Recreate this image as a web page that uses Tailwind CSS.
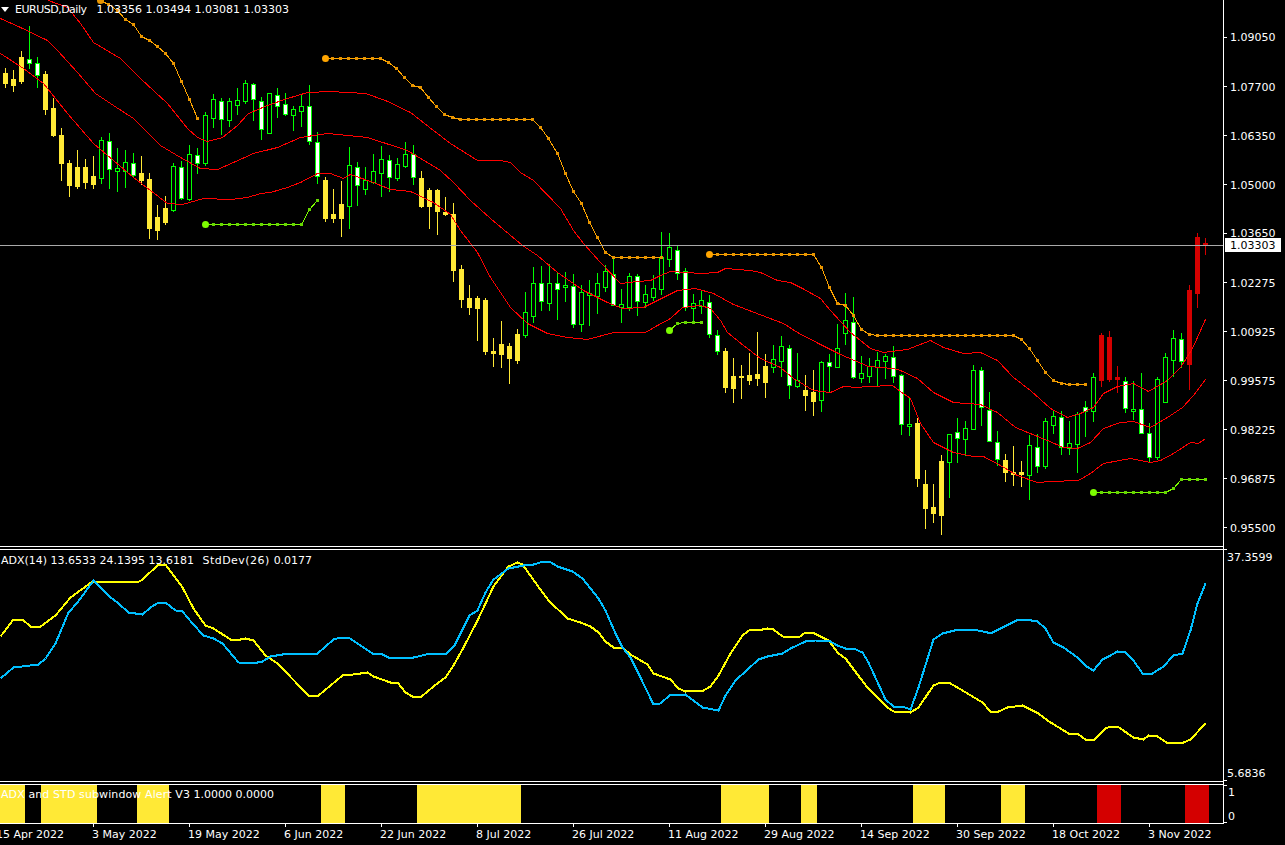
<!DOCTYPE html>
<html lang="en">
<head>
    <meta charset="UTF-8">
    <meta name="viewport" content="width=device-width, initial-scale=1.0">
    <title>EURUSD,Daily</title>
    <script src="https://cdn.jsdelivr.net/npm/@tailwindcss/browser@4"></script>
</head>
<body class="bg-black text-white overflow-hidden font-['DejaVu_Sans',sans-serif] text-[11px] leading-[14px]">
    <div class="flex w-[1285px] h-[845px] overflow-hidden">
        <!-- chart column -->
        <div class="w-[1223px] shrink-0 flex flex-col">
            <!-- main window -->
            <div class="relative h-[547px] border-b border-white">
                <svg id="mainChart" class="block" width="1223" height="546" viewBox="0 0 1223 546"></svg>
                <div class="absolute left-[1px] top-[7px] w-0 h-0 border-l-[4px] border-r-[4px] border-t-[5px] border-l-transparent border-r-transparent border-t-white"></div>
                <div class="absolute left-[15px] top-[3px] whitespace-pre"><span class="tracking-[-0.5px] mr-[3px]">EURUSD,Daily</span>  1.03356 1.03494 1.03081 1.03303</div>
            </div>
            <!-- ADX window -->
            <div class="relative mt-[2px] h-[233px] border-y border-white">
                <svg id="adxChart" class="block" width="1223" height="231" viewBox="0 550 1223 231"></svg>
                <div class="absolute left-[1px] top-[4px] whitespace-pre">ADX(14) 13.6533 24.1395 13.6181 <span class="ml-[5px] tracking-[0.45px]">StdDev(26) </span>0.0177</div>
            </div>
            <!-- alert window -->
            <div class="relative mt-[2px] h-[40px] border-y border-white">
                <svg class="block" width="1223" height="38" viewBox="0 784 1223 38" shape-rendering="crispEdges">
                    <g fill="#ffe936">
                        <rect x="0" y="784" width="25" height="38"/>
                        <rect x="41" y="784" width="56" height="38"/>
                        <rect x="137" y="784" width="32" height="38"/>
                        <rect x="321" y="784" width="24" height="38"/>
                        <rect x="417" y="784" width="104" height="38"/>
                        <rect x="721" y="784" width="48" height="38"/>
                        <rect x="801" y="784" width="16" height="38"/>
                        <rect x="913" y="784" width="32" height="38"/>
                        <rect x="1001" y="784" width="24" height="38"/>
                    </g>
                    <g fill="#d40000">
                        <rect x="1097" y="784" width="24" height="38"/>
                        <rect x="1185" y="784" width="24" height="38"/>
                    </g>
                </svg>
                <div class="absolute left-[1px] top-[3px] whitespace-pre"><span class="tracking-[0.1px]">ADX and STD subwindow Alert V3 </span>1.0000 0.0000</div>
            </div>
            <!-- time scale -->
            <div class="relative flex-1 overflow-hidden">
                <span class="absolute left-[-4px] top-[4px] whitespace-nowrap">15 Apr 2022</span>
                <span class="absolute left-[92px] top-[4px] whitespace-nowrap">3 May 2022</span>
                <span class="absolute left-[188px] top-[4px] whitespace-nowrap">19 May 2022</span>
                <span class="absolute left-[284px] top-[4px] whitespace-nowrap">6 Jun 2022</span>
                <span class="absolute left-[380px] top-[4px] whitespace-nowrap">22 Jun 2022</span>
                <span class="absolute left-[476px] top-[4px] whitespace-nowrap">8 Jul 2022</span>
                <span class="absolute left-[572px] top-[4px] whitespace-nowrap">26 Jul 2022</span>
                <span class="absolute left-[668px] top-[4px] whitespace-nowrap">11 Aug 2022</span>
                <span class="absolute left-[764px] top-[4px] whitespace-nowrap">29 Aug 2022</span>
                <span class="absolute left-[860px] top-[4px] whitespace-nowrap">14 Sep 2022</span>
                <span class="absolute left-[956px] top-[4px] whitespace-nowrap">30 Sep 2022</span>
                <span class="absolute left-[1052px] top-[4px] whitespace-nowrap">18 Oct 2022</span>
                <span class="absolute left-[1148px] top-[4px] whitespace-nowrap">3 Nov 2022</span>
                <i class="absolute left-[93px] top-0 w-px h-[3px] bg-white"></i>
                <i class="absolute left-[189px] top-0 w-px h-[3px] bg-white"></i>
                <i class="absolute left-[285px] top-0 w-px h-[3px] bg-white"></i>
                <i class="absolute left-[381px] top-0 w-px h-[3px] bg-white"></i>
                <i class="absolute left-[477px] top-0 w-px h-[3px] bg-white"></i>
                <i class="absolute left-[573px] top-0 w-px h-[3px] bg-white"></i>
                <i class="absolute left-[669px] top-0 w-px h-[3px] bg-white"></i>
                <i class="absolute left-[765px] top-0 w-px h-[3px] bg-white"></i>
                <i class="absolute left-[861px] top-0 w-px h-[3px] bg-white"></i>
                <i class="absolute left-[957px] top-0 w-px h-[3px] bg-white"></i>
                <i class="absolute left-[1053px] top-0 w-px h-[3px] bg-white"></i>
                <i class="absolute left-[1149px] top-0 w-px h-[3px] bg-white"></i>
            </div>
        </div>
        <!-- price scale -->
        <div class="relative flex-1 h-[824px] border-l border-white">
            <span class="absolute left-[6px] top-[31px]">1.09050</span>
            <span class="absolute left-[6px] top-[81px]">1.07700</span>
            <span class="absolute left-[6px] top-[130px]">1.06350</span>
            <span class="absolute left-[6px] top-[179px]">1.05000</span>
            <span class="absolute left-[6px] top-[227px]">1.03650</span>
            <span class="absolute left-[6px] top-[277px]">1.02275</span>
            <span class="absolute left-[6px] top-[326px]">1.00925</span>
            <span class="absolute left-[6px] top-[375px]">0.99575</span>
            <span class="absolute left-[6px] top-[424px]">0.98225</span>
            <span class="absolute left-[6px] top-[473px]">0.96875</span>
            <span class="absolute left-[6px] top-[522px]">0.95500</span>
            <span class="absolute left-[1px] top-[238px] w-[56px] h-[14px] pl-[5px] pt-px bg-white text-black">1.03303</span>
            <span class="absolute left-[3px] top-[551px]">37.3599</span>
            <span class="absolute left-[3px] top-[767px]">5.6836</span>
            <span class="absolute left-[4px] top-[786px]">1</span>
            <span class="absolute left-[4px] top-[810px]">0</span>
            <i class="absolute left-0 top-[37px] w-[3px] h-px bg-white"></i>
            <i class="absolute left-0 top-[86px] w-[3px] h-px bg-white"></i>
            <i class="absolute left-0 top-[135px] w-[3px] h-px bg-white"></i>
            <i class="absolute left-0 top-[184px] w-[3px] h-px bg-white"></i>
            <i class="absolute left-0 top-[233px] w-[3px] h-px bg-white"></i>
            <i class="absolute left-0 top-[282px] w-[3px] h-px bg-white"></i>
            <i class="absolute left-0 top-[331px] w-[3px] h-px bg-white"></i>
            <i class="absolute left-0 top-[380px] w-[3px] h-px bg-white"></i>
            <i class="absolute left-0 top-[429px] w-[3px] h-px bg-white"></i>
            <i class="absolute left-0 top-[478px] w-[3px] h-px bg-white"></i>
            <i class="absolute left-0 top-[527px] w-[3px] h-px bg-white"></i>
            <i class="absolute left-0 top-[549px] w-[3px] h-px bg-white"></i>
            <i class="absolute left-0 top-[780px] w-[3px] h-px bg-white"></i>
            <i class="absolute left-0 top-[785px] w-[3px] h-px bg-white"></i>
            <i class="absolute left-0 top-[822px] w-[3px] h-px bg-white"></i>
        </div>
    </div>

    <script>
        // y=yellow bear, w=white filled, k=hollow, r=red: [type, high, top, bottom, low]
        const candles = [
            ['y',68,73,83,87],['y',70,79,85,91],['y',51,57,81,83],['w',26,59,63,68],['w',57,63,75,87],
            ['y',71,74,109,114],['y',98,108,135,136],['y',128,135,163,180],['y',160,163,185,196],['y',150,167,186,188],
            ['y',159,167,182,188],['y',156,176,184,188],['k',137,140,178,183],['w',133,141,169,188],['k',148,168,171,191],
            ['k',150,162,171,187],['w',153,163,175,176],['y',156,173,180,184],['y',173,179,228,238],['y',205,217,230,239],
            ['y',196,208,222,224],['k',163,166,210,211],['w',161,167,198,199],['k',145,154,199,200],['w',148,155,163,173],
            ['k',112,115,163,165],['k',94,99,118,127],['w',98,101,119,134],['k',98,101,120,126],['k',88,100,105,114],
            ['k',80,83,101,103],['w',83,84,99,120],['w',97,101,129,139],['k',93,93,133,133],['w',88,95,106,117],
            ['w',93,104,114,115],['k',106,109,115,130],['k',94,106,111,126],['w',85,106,141,144],['w',132,142,176,183],
            ['y',177,180,218,221],['y',189,214,218,222],['y',181,204,218,236],['k',147,165,206,228],['w',162,167,185,205],
            ['k',167,180,189,194],['k',154,171,182,183],['k',146,159,173,196],['w',155,160,177,191],['k',158,164,178,180],
            ['k',142,154,166,167],['w',145,154,177,184],['y',171,178,206,207],['y',188,190,206,228],['y',189,190,211,234],
            ['y',197,212,214,215],['y',203,214,270,281],['y',265,269,299,307],['y',285,298,307,314],['y',296,298,308,340],
            ['y',298,300,351,354],['y',338,351,353,366],['y',321,344,354,367],['y',343,346,358,383],['y',329,334,360,363],
            ['k',292,312,335,337],['k',267,283,316,322],['w',266,283,301,310],['k',264,283,303,310],['w',272,283,289,319],
            ['k',272,285,287,301],['w',274,286,324,327],['k',285,292,324,331],['k',280,293,295,325],['k',273,283,296,313],
            ['k',265,271,287,291],['w',258,274,305,305],['k',289,304,307,322],['k',273,276,307,310],['w',274,276,301,315],
            ['k',285,294,302,307],['k',275,288,297,300],['k',232,257,289,294],['k',233,247,259,266],['w',246,250,273,279],
            ['w',268,271,307,310],['k',294,303,308,322],['k',291,300,306,313],['w',295,302,334,337],['w',330,335,351,354],
            ['y',348,351,387,392],['y',358,376,388,402],['y',365,376,377,398],['y',353,375,380,384],['y',332,374,378,385],
            ['y',354,366,382,397],['k',345,359,367,372],['k',336,346,361,376],['w',345,348,385,398],['k',353,380,386,387],
            ['y',375,390,395,410],['y',370,392,401,415],['k',361,362,400,411],['w',354,362,366,392],['k',324,348,367,367],
            ['k',293,320,333,344],['w',297,322,377,378],['k',356,373,378,382],['k',358,366,376,382],['k',352,360,367,386],
            ['k',354,356,361,378],['w',346,357,376,382],['w',374,375,424,434],['k',398,424,426,435],['y',418,423,478,486],
            ['y',470,484,508,528],['y',484,507,513,522],['y',455,461,515,534],['k',434,434,462,497],['w',418,432,438,462],
            ['k',421,428,439,455],['k',365,370,429,429],['w',367,370,407,425],['w',392,410,441,441],['w',431,442,459,465],
            ['y',454,460,472,481],['y',446,472,474,485],['y',461,472,474,486],['k',435,445,475,499],['w',434,447,466,472],
            ['k',418,421,466,468],['k',410,416,425,433],['w',411,417,447,454],['k',421,443,448,454],['k',412,414,444,472],
            ['w',401,407,411,436],['k',373,377,411,421],['r',333,335,380,386],['r',331,337,379,381],['r',366,377,379,392],
            ['w',377,381,408,412],['k',381,409,411,419],['w',373,409,433,433],['w',423,433,457,462],['k',377,379,457,459],
            ['k',353,357,402,402],['k',330,338,360,376],['w',333,339,361,367],['r',285,290,364,389],['r',233,237,293,307],
            ['r',238,243,245,254]
        ];

        const redA = [[48,0],[67,7],[80,23],[93,42],[120,58],[140,78],[167,103],[187,128],[197,137],[207,141],[222,137],[237,125],[248,113],[267,105],[287,98],[307,92],[330,91],[365,93],[385,100],[410,112],[433,130],[450,143],[477,160],[500,160],[510,162],[520,172],[533,180],[560,208],[573,230],[583,243],[600,262],[620,283],[637,281],[650,280],[660,275],[670,271],[687,272],[700,273],[717,272],[725,268],[737,269],[750,270],[760,272],[777,280],[790,282],[802,288],[820,298],[830,310],[850,332],[870,348],[883,352],[907,349],[930,340],[943,347],[963,353],[980,352],[997,360],[1013,377],[1030,390],[1050,408],[1067,417],[1080,413],[1093,407],[1103,393],[1117,386],[1133,383],[1148,391],[1167,380],[1180,367],[1192,348],[1205,319]];
        const redB = [[0,18],[20,27],[47,40],[57,50],[77,72],[95,93],[113,105],[133,118],[147,132],[160,145],[180,157],[200,168],[217,169],[233,162],[253,153],[277,147],[300,137],[327,133],[367,137],[407,150],[440,170],[453,182],[470,200],[490,218],[522,245],[537,255],[557,272],[583,290],[607,302],[622,308],[643,307],[657,300],[677,290],[695,288],[713,293],[733,304],[767,317],[783,323],[797,332],[820,344],[840,354],[868,366],[893,368],[900,370],[917,378],[933,392],[953,402],[980,404],[997,412],[1015,427],[1047,440],[1063,447],[1077,448],[1090,442],[1103,428],[1120,422],[1133,421],[1150,427],[1167,417],[1182,407],[1193,395],[1205,379]];
        const redC = [[0,53],[23,68],[43,83],[67,113],[93,143],[113,160],[133,177],[150,190],[167,203],[182,204],[203,198],[230,199],[247,197],[260,193],[270,192],[287,187],[300,182],[317,173],[330,173],[343,178],[350,174],[373,182],[390,189],[410,191],[433,202],[450,214],[460,230],[477,252],[490,277],[510,307],[527,323],[547,333],[567,337],[587,339],[613,332],[645,332],[657,325],[670,318],[682,307],[700,305],[710,308],[720,320],[727,332],[743,345],[760,358],[780,367],[793,378],[813,390],[830,392],[843,386],[857,387],[867,386],[892,385],[900,391],[910,398],[920,423],[933,442],[953,452],[973,456],[983,456],[1000,465],[1017,475],[1037,482],[1050,481],[1078,480],[1090,473],[1103,463],[1130,458],[1150,462],[1160,460],[1173,453],[1190,442],[1198,443],[1205,438]];

        const orange1 = [[100,0],[108,4],[117,10],[125,19],[133,24],[141,36],[149,40],[157,46],[165,53],[173,63],[181,81],[189,99],[197,118]];
        const orange2 = [[325,58],[332,58],[340,58],[348,58],[356,58],[364,58],[372,58],[380,58],[388,62],[396,68],[404,77],[412,85],[420,87],[428,97],[436,106],[444,114],[452,117],[460,119],[468,119],[476,119],[484,119],[492,119],[500,119],[508,119],[516,119],[524,119],[532,119],[540,127],[548,138],[557,153],[565,173],[573,191],[581,203],[589,222],[597,237],[605,252],[613,257],[621,257],[629,257],[637,257],[645,257],[653,257],[661,257]];
        const orange3 = [[709,254],[717,254],[725,254],[733,254],[741,254],[749,254],[757,254],[765,254],[773,254],[781,254],[789,254],[797,254],[805,254],[813,254],[821,267],[829,287],[837,303],[845,305],[853,315],[861,329],[869,334],[877,335],[885,335],[893,335],[901,335],[909,335],[917,335],[925,335],[933,335],[941,335],[949,335],[957,335],[965,335],[973,335],[981,335],[989,335],[997,335],[1005,335],[1013,335],[1021,339],[1029,348],[1037,360],[1045,372],[1053,380],[1061,383],[1069,384],[1077,384],[1085,384]];
        const lime1 = [[205,224],[213,224],[221,224],[229,224],[237,224],[245,224],[253,224],[261,224],[269,224],[277,224],[285,224],[293,224],[301,224],[309,209],[317,200]];
        const lime2 = [[669,330],[677,323],[685,322],[693,322],[701,322]];
        const lime3 = [[1093,492],[1101,492],[1109,492],[1117,492],[1125,492],[1133,492],[1141,492],[1149,492],[1157,492],[1165,492],[1173,488],[1181,479],[1189,479],[1197,479],[1205,479]];

        const adxYellow = [[0,636],[13,619],[22,619],[30,626],[40,626],[55,615],[70,597],[92,581],[125,581],[137,582],[142,579],[158,564],[165,564],[182,587],[193,608],[205,625],[213,628],[230,639],[240,639],[245,638],[253,640],[265,655],[277,663],[308,695],[318,695],[342,675],[353,674],[367,672],[373,676],[390,682],[397,682],[405,692],[412,696],[421,696],[433,686],[445,677],[453,665],[463,647],[477,620],[493,586],[508,566],[517,562],[522,564],[537,585],[548,600],[567,618],[580,622],[590,626],[598,632],[605,641],[613,647],[622,647],[630,654],[647,664],[653,673],[670,679],[678,688],[685,691],[690,690],[703,690],[710,686],[718,675],[730,653],[742,635],[750,629],[762,629],[767,628],[773,629],[782,636],[798,637],[805,632],[812,632],[828,640],[838,653],[845,658],[860,678],[867,687],[887,707],[893,711],[910,712],[918,707],[933,685],[940,682],[948,682],[957,687],[982,702],[990,711],[998,711],[1007,707],[1022,705],[1038,713],[1047,720],[1068,733],[1077,733],[1085,739],[1094,739],[1105,728],[1110,726],[1117,726],[1133,737],[1143,739],[1148,735],[1157,736],[1166,742],[1183,742],[1190,739],[1205,723]];
        const adxBlue = [[0,678],[13,667],[38,664],[45,658],[55,643],[68,612],[77,602],[93,580],[110,597],[117,602],[128,612],[142,614],[150,607],[158,602],[165,602],[175,610],[182,611],[192,623],[203,635],[213,638],[222,643],[238,662],[252,663],[262,661],[270,656],[288,653],[317,653],[333,639],[340,637],[348,637],[360,645],[372,653],[382,654],[388,657],[413,657],[430,653],[446,653],[454,645],[469,615],[477,610],[485,592],[493,579],[508,568],[523,565],[533,564],[543,561],[549,561],[557,566],[572,571],[582,578],[598,598],[605,610],[615,633],[622,647],[630,657],[638,673],[653,704],[660,703],[669,695],[685,694],[702,707],[718,710],[725,695],[735,680],[758,659],[767,656],[782,653],[790,648],[805,641],[815,640],[828,640],[837,645],[845,648],[853,648],[862,652],[868,662],[885,699],[893,706],[902,706],[910,709],[918,687],[933,639],[942,633],[958,629],[973,629],[987,632],[992,632],[1010,623],[1018,619],[1025,619],[1037,621],[1045,628],[1053,642],[1063,647],[1077,657],[1086,666],[1093,670],[1102,659],[1110,655],[1117,651],[1125,652],[1133,660],[1142,673],[1152,673],[1163,666],[1173,655],[1182,653],[1190,630],[1197,603],[1205,583]];

        const SVGNS = 'http://www.w3.org/2000/svg';
        function add(parent, tag, attrs) {
            const el = document.createElementNS(SVGNS, tag);
            for (const k in attrs) el.setAttribute(k, attrs[k]);
            parent.appendChild(el);
            return el;
        }
        function line(svg, pts, color, width) {
            add(svg, 'polyline', {
                points: pts.map(p => (p[0] + 0.5) + ',' + (p[1] + 0.5)).join(' '),
                fill: 'none', stroke: color, 'stroke-width': width, 'shape-rendering': 'crispEdges'
            });
        }
        function dotted(svg, pts, lineColor, dotColor, bigColor) {
            line(svg, pts, lineColor, 1);
            pts.forEach((p, i) => {
                if (i === 0) add(svg, 'circle', { cx: p[0] + 0.5, cy: p[1] + 0.5, r: 3.5, fill: bigColor });
                else add(svg, 'rect', { x: p[0] - 1, y: p[1] - 1, width: 3, height: 3, fill: dotColor, 'shape-rendering': 'crispEdges' });
            });
        }

        // candles
        const main = document.getElementById('mainChart');
        const bodyColor = { y: '#ffe936', r: '#d40000', w: '#00ff00', k: '#00ff00' };
        candles.forEach((c, i) => {
            const [type, hi, top, bot, lo] = c;
            const left = 3 + 8 * i;
            const color = bodyColor[type];
            const g = add(main, 'g', { 'shape-rendering': 'crispEdges' });
            add(g, 'rect', { x: left + 2, y: hi, width: 1, height: lo - hi + 1, fill: color });
            add(g, 'rect', { x: left, y: top, width: 5, height: bot - top + 1, fill: color });
            if ((type === 'w' || type === 'k') && bot - top > 1) {
                add(g, 'rect', { x: left + 1, y: top + 1, width: 3, height: bot - top - 1, fill: type === 'w' ? '#ffffff' : '#000000' });
            }
        });

        // envelope lines, stops, last price
        line(main, redA, '#ff0000', 1);
        line(main, redB, '#ff0000', 1);
        line(main, redC, '#ff0000', 1);
        dotted(main, orange1, '#ffa500', '#e89500', '#e89500');
        dotted(main, orange2, '#ffa500', '#e89500', '#ffa500');
        dotted(main, orange3, '#ffa500', '#e89500', '#ffa500');
        dotted(main, lime1, '#7cfc00', '#66d800', '#7cfc00');
        dotted(main, lime2, '#7cfc00', '#66d800', '#7cfc00');
        dotted(main, lime3, '#7cfc00', '#66d800', '#7cfc00');
        add(main, 'rect', { x: 0, y: 245, width: 1223, height: 1, fill: '#a9a9a9', 'shape-rendering': 'crispEdges' });

        // ADX window
        const adx = document.getElementById('adxChart');
        line(adx, adxYellow, '#ffff00', 2);
        line(adx, adxBlue, '#00bfff', 2);
    </script>
</body>
</html>
